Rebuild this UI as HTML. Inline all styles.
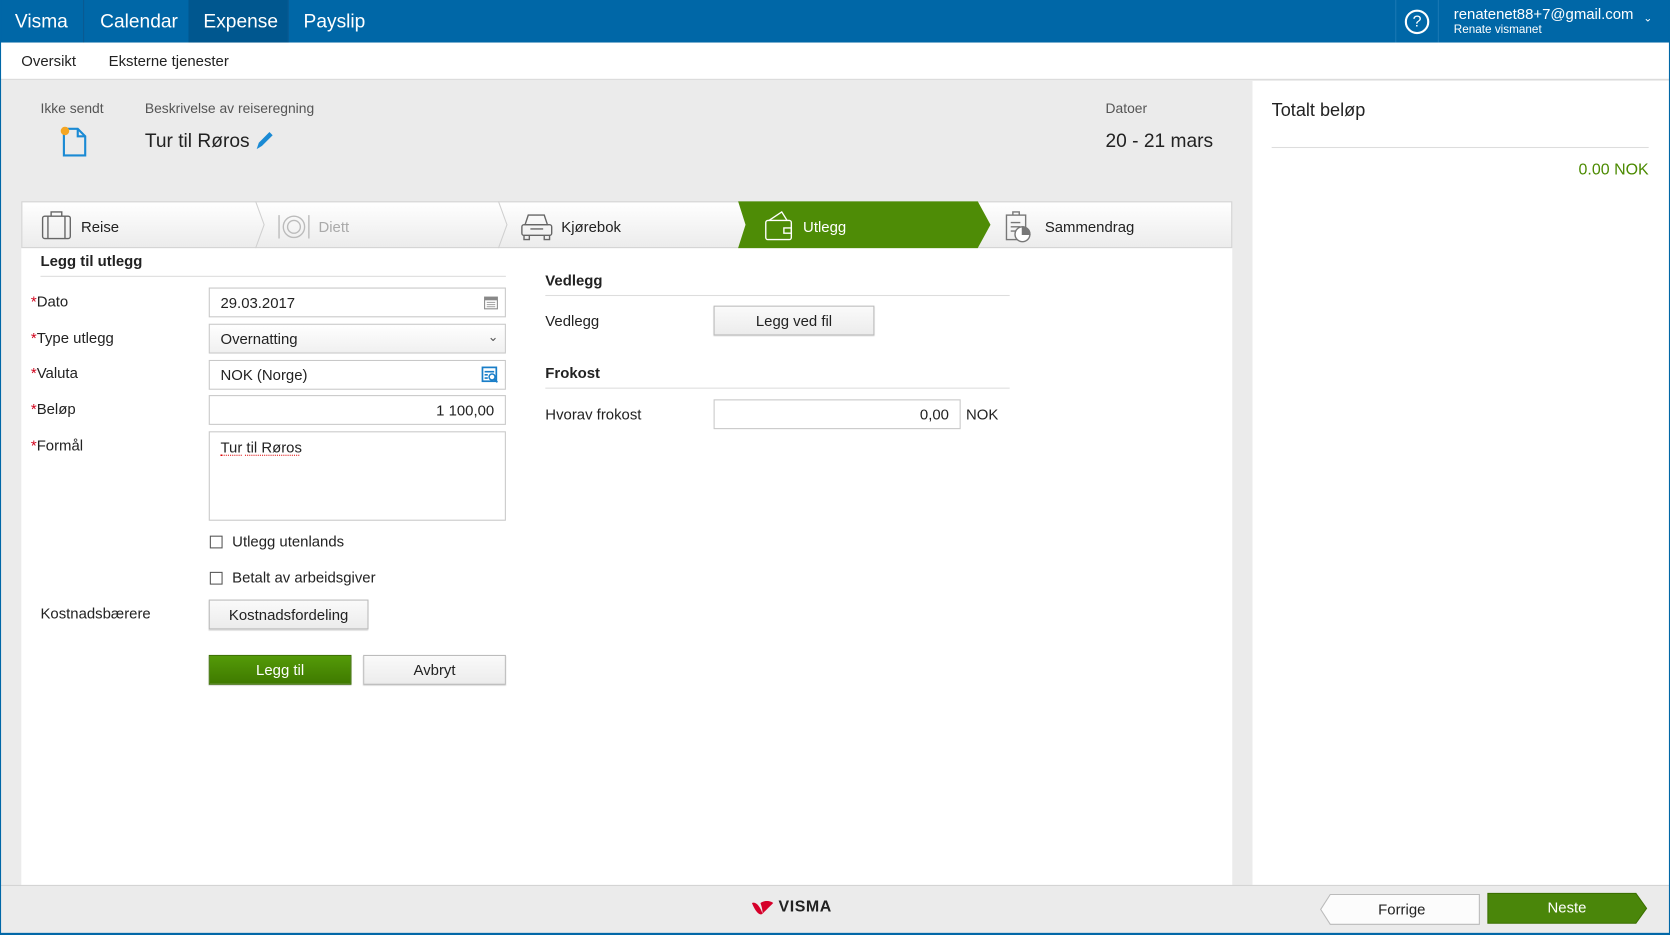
<!DOCTYPE html>
<html><head><meta charset="utf-8"><style>
*{box-sizing:border-box;margin:0;padding:0}
html,body{width:1670px;height:935px;overflow:hidden;background:#fff}
#w{position:absolute;left:0;top:0;width:1568px;height:878px;transform:scale(1.06505,1.0649);transform-origin:0 0;font-family:"Liberation Sans","DejaVu Sans",sans-serif;color:#222;font-size:14px;background:#ebebeb}
.a{position:absolute}
.top{left:0;top:0;width:1568px;height:40px;background:#0067a7}
.nav{top:0;height:40px;line-height:40px;color:#fff;font-size:18px;padding:0 14px;border-right:1px solid #0a5a90}
.sub{left:0;top:40px;width:1568px;height:35px;background:#fff;border-bottom:1px solid #d8d8d8}
.lbl{font-size:14px;color:#222}
.inp{background:#fff;border:1px solid #c8c8c8;height:28px;line-height:26px;padding:0 10px;font-size:14px}
.btn{border:1px solid #bbb;background:linear-gradient(#fafafa,#ececec);text-align:center;height:28px;line-height:26px;font-size:14px;box-shadow:0 1px 1px #ccc}
.star{color:#d0021b}
.cb{width:12px;height:12px;border:1px solid #555;background:#fff}
</style></head><body><div id="w">
<div class="a" style="left:0;top:0;width:1px;height:878px;background:#0067a7;z-index:5"></div>
<div class="a" style="right:0;top:0;width:1px;height:878px;background:#0067a7;z-index:5"></div>
<div class="a top"></div>
<div class="a nav" style="left:0">Visma</div>
<div class="a nav" style="left:80px">Calendar</div>
<div class="a nav" style="left:177px;width:94px;background:#00578f">Expense</div>
<div class="a nav" style="left:271px;border:none">Payslip</div>
<div class="a" style="left:1310px;top:0;width:1px;height:40px;background:#1a78b4"></div>
<div class="a" style="left:1350px;top:0;width:1px;height:40px;background:#1a78b4"></div>
<div class="a" style="left:1319px;top:9px;width:23px;height:23px;border:2px solid #fff;border-radius:50%;color:#fff;text-align:center;font-size:15px;line-height:19px">?</div>
<div class="a" style="left:1365px;top:5px;color:#fff;font-size:14px">renatenet88+7@gmail.com</div>
<div class="a" style="left:1365px;top:22px;color:#fff;font-size:11px">Renate vismanet</div>
<div class="a" style="left:1543px;top:12px;color:#fff;font-size:10px">&#8964;</div>
<div class="a sub"></div>
<div class="a" style="left:20px;top:49px;font-size:14px">Oversikt</div>
<div class="a" style="left:102px;top:49px;font-size:14px">Eksterne tjenester</div>

<div class="a" style="left:38px;top:94px;color:#555;font-size:13px">Ikke sendt</div>
<svg class="a" style="left:54px;top:116px" width="30" height="32"><polygon points="6,5 19,5 26,12 26,30 6,30" fill="none" stroke="#1a8ad4" stroke-width="2"/><polyline points="19,5 19,12 26,12" fill="none" stroke="#1a8ad4" stroke-width="2"/><circle cx="7" cy="7" r="4" fill="#f5a623"/></svg>
<div class="a" style="left:136px;top:94px;color:#555;font-size:13px">Beskrivelse av reiseregning</div>
<div class="a" style="left:136px;top:122px;font-size:18px;color:#222">Tur til Røros</div>
<svg class="a" style="left:238px;top:121px" width="20" height="22"><path d="M3 19 L5 13 L15 3 L18 6 L8 16 Z" fill="#1a8ad4"/></svg>
<div class="a" style="left:1038px;top:94px;color:#555;font-size:13px">Datoer</div>
<div class="a" style="left:1038px;top:122px;font-size:18px">20 - 21 mars</div>

<div class="a" style="left:1176px;top:76px;width:391px;height:755px;background:#fff"></div>
<div class="a" style="left:1194px;top:94px;font-size:17px">Totalt beløp</div>
<div class="a" style="left:1194px;top:138px;width:354px;height:1px;background:#ddd"></div>
<div class="a" style="left:1480px;top:151px;font-size:15px;color:#4b8a00;width:68px;text-align:right">0.00 NOK</div>

<div class="a" style="left:20px;top:233px;width:1137px;height:598px;background:#fff"></div>
<div class="a" style="left:20px;top:189px;width:1137px;height:44px;background:linear-gradient(#fff,#ececec);border:1px solid #d4d4d4"></div>
<svg class="a" style="left:20px;top:189px" width="1137" height="45">
<polyline points="220,0 228,22 220,44" fill="none" stroke="#d0d0d0"/>
<polyline points="448,0 456,22 448,44" fill="none" stroke="#d0d0d0"/>
<polygon points="673,0 898,0 910,22 898,44 673,44 680,22" fill="#4e8c06"/>
<g fill="none" stroke="#666" stroke-width="1.3"><rect x="20" y="14" width="26" height="21" rx="2"/><path d="M28 14 V10 H38 V14 M25 14 V35 M41 14 V35"/></g>
<g fill="none" stroke="#bbb" stroke-width="1.3"><circle cx="256" cy="24" r="10"/><circle cx="256" cy="24" r="6"/><path d="M242 13 V35 M270 13 V35"/></g>
<g fill="none" stroke="#666" stroke-width="1.3"><path d="M473 22 L476 13 H491 L494 22 Z"/><rect x="470" y="22" width="28" height="10" rx="2"/><path d="M472 32 V36 H477 V32 M491 32 V36 H496 V32 M478 26 H490"/></g>
<g fill="none" stroke="#fff" stroke-width="1.3"><rect x="699" y="18" width="24" height="18" rx="2"/><path d="M702 18 L714 10 L719 18 M716 25 H723 V30 H716 Z"/></g>
<g fill="none" stroke="#777" stroke-width="1.3"><rect x="925" y="13" width="18" height="23"/><path d="M931 13 V10 H937 V13 M929 20 H938 M929 24 H938 M929 28 H935"/><circle cx="940" cy="31" r="7" fill="#fff"/><path d="M940 31 V24 A7 7 0 0 1 947 31 Z" fill="#777"/></g>
</svg>
<div class="a" style="left:76px;top:205px;font-size:14px">Reise</div>
<div class="a" style="left:299px;top:205px;font-size:14px;color:#aaa">Diett</div>
<div class="a" style="left:527px;top:205px;font-size:14px">Kjørebok</div>
<div class="a" style="left:754px;top:205px;font-size:14px;color:#fff">Utlegg</div>
<div class="a" style="left:981px;top:205px;font-size:14px">Sammendrag</div>

<div class="a" style="left:38px;top:237px;font-size:14px;font-weight:bold">Legg til utlegg</div>
<div class="a" style="left:38px;top:259px;width:437px;height:1px;background:#ddd"></div>
<div class="a lbl" style="left:29px;top:275px"><span class="star">*</span>Dato</div>
<div class="a lbl" style="left:29px;top:309px"><span class="star">*</span>Type utlegg</div>
<div class="a lbl" style="left:29px;top:342px"><span class="star">*</span>Valuta</div>
<div class="a lbl" style="left:29px;top:376px"><span class="star">*</span>Beløp</div>
<div class="a lbl" style="left:29px;top:410px"><span class="star">*</span>Formål</div>
<div class="a inp" style="left:196px;top:270px;width:279px">29.03.2017</div>
<svg class="a" style="left:454px;top:277px" width="14" height="14"><rect x="1" y="2" width="12" height="11" fill="none" stroke="#888"/><rect x="1" y="2" width="12" height="3" fill="#888"/><path d="M3 7h8M3 9h8M3 11h8" stroke="#aaa"/></svg>
<div class="a inp" style="left:196px;top:304px;width:279px;background:linear-gradient(#fff,#f0f0f0)">Overnatting</div>
<div class="a" style="left:458px;top:309px;font-size:12px;color:#555">&#8964;</div>
<div class="a inp" style="left:196px;top:338px;width:279px">NOK (Norge)</div>
<svg class="a" style="left:452px;top:344px" width="16" height="16"><rect x="1" y="1" width="13" height="13" fill="none" stroke="#1a7ec8" stroke-width="1.6"/><path d="M3 5h9M3 8h3M3 11h3" stroke="#1a7ec8" stroke-width="1.5"/><circle cx="10" cy="10" r="2.8" fill="#fff" stroke="#1a7ec8" stroke-width="1.4"/><path d="M12 12l3 3" stroke="#1a7ec8" stroke-width="1.6"/></svg>
<div class="a inp" style="left:196px;top:371px;width:279px;text-align:right">1 100,00</div>
<div class="a inp" style="left:196px;top:405px;width:279px;height:84px;line-height:28px">Tur til Røros</div>
<div class="a" style="left:207px;top:426px;width:20px;height:2px;border-bottom:1px dotted #d00"></div>
<div class="a" style="left:230px;top:426px;width:51px;height:2px;border-bottom:1px dotted #d00"></div>
<div class="a cb" style="left:197px;top:503px"></div>
<div class="a lbl" style="left:218px;top:500px">Utlegg utenlands</div>
<div class="a cb" style="left:197px;top:537px"></div>
<div class="a lbl" style="left:218px;top:534px">Betalt av arbeidsgiver</div>
<div class="a lbl" style="left:38px;top:568px">Kostnadsbærere</div>
<div class="a btn" style="left:196px;top:563px;width:150px">Kostnadsfordeling</div>
<div class="a btn" style="left:196px;top:615px;width:134px;background:linear-gradient(#549a08,#3f7a00);color:#fff;border-color:#3b7000">Legg til</div>
<div class="a btn" style="left:341px;top:615px;width:134px">Avbryt</div>

<div class="a" style="left:512px;top:255px;font-size:14px;font-weight:bold">Vedlegg</div>
<div class="a" style="left:512px;top:277px;width:436px;height:1px;background:#ddd"></div>
<div class="a lbl" style="left:512px;top:293px">Vedlegg</div>
<div class="a btn" style="left:670px;top:287px;width:151px">Legg ved fil</div>
<div class="a" style="left:512px;top:342px;font-size:14px;font-weight:bold">Frokost</div>
<div class="a" style="left:512px;top:364px;width:436px;height:1px;background:#ddd"></div>
<div class="a lbl" style="left:512px;top:381px">Hvorav frokost</div>
<div class="a inp" style="left:670px;top:375px;width:232px;text-align:right">0,00</div>
<div class="a lbl" style="left:907px;top:381px">NOK</div>

<div class="a" style="left:0;top:831px;width:1568px;height:47px;background:#ebebeb;border-top:1px solid #d4d4d4"></div>
<svg class="a" style="left:704px;top:844px" width="24" height="18"><path d="M2 4 C6 2 10 8 12 14 C10 16 6 14 2 4Z M10 4 C14 1 20 2 22 4 C18 8 14 12 12 14 C12 10 11 7 10 4Z" fill="#d6002a"/></svg>
<div class="a" style="left:731px;top:843px;font-size:15px;font-weight:bold;color:#222;letter-spacing:0.5px">VISMA</div>
<svg class="a" style="left:1239px;top:839px" width="152" height="31"><polygon points="10,1 150,1 150,29 10,29 1,15" fill="#fcfcfc" stroke="#bbb"/></svg>
<div class="a" style="left:1294px;top:846px;font-size:14px">Forrige</div>
<svg class="a" style="left:1396px;top:838px" width="152" height="30"><polygon points="1,1 140,1 150,15 140,29 1,29" fill="#4a860a" stroke="#3b7000"/></svg>
<div class="a" style="left:1453px;top:844px;font-size:14px;color:#fff">Neste</div>
<div class="a" style="left:0;top:876px;width:1568px;height:2px;background:#0067a7"></div>
</div></body></html>
